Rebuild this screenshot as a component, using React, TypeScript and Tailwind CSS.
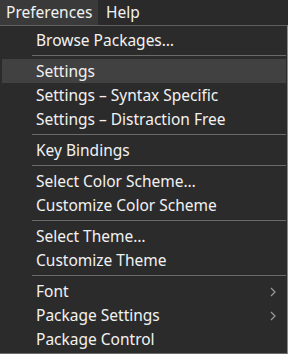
import React from 'react';

type Item = { label: string; sub?: boolean; active?: boolean } | 'sep';

const items: Item[] = [
  { label: 'Browse Packages…' },
  'sep',
  { label: 'Settings', active: true },
  { label: 'Settings – Syntax Specific' },
  { label: 'Settings – Distraction Free' },
  'sep',
  { label: 'Key Bindings' },
  'sep',
  { label: 'Select Color Scheme…' },
  { label: 'Customize Color Scheme' },
  'sep',
  { label: 'Select Theme…' },
  { label: 'Customize Theme' },
  'sep',
  { label: 'Font', sub: true },
  { label: 'Package Settings', sub: true },
  { label: 'Package Control' },
];

function Chevron() {
  return (
    <svg width="6" height="10" viewBox="0 0 6 10" className="shrink-0">
      <path d="M1 1 L5 5 L1 9" fill="none" stroke="#9a9a9a" strokeWidth="1.2" />
    </svg>
  );
}

export default function App() {
  return (
    <div className="w-[288px] h-[354px] bg-[#2b2b2b] text-[#f2f2f2] font-['Noto_Sans',sans-serif] overflow-hidden">
      {/* Menu bar */}
      <div className="h-[25px] flex items-stretch bg-[#2a2a2a] text-[15.5px]">
        <div className="px-[6px] pt-[1px] w-[98px] bg-[#3a3a3a] flex items-center">Preferences</div>
        <div className="px-[8px] pt-[1px] flex items-center">Help</div>
      </div>

      {/* Dropdown */}
      <div className="h-[329px] border-t border-[#5e5e5e] border-r border-r-[#8a8a8a] border-b border-b-[#6a6a6a] pt-[2px] pl-[2px] pr-[1px]">
        {items.map((item, i) =>
          item === 'sep' ? (
            <div key={i} className="h-px bg-[#6a6a6a] ml-[30px] my-[3px]" />
          ) : (
            <div
              key={i}
              className={`h-[24px] flex items-center justify-between pt-[2px] pl-[34px] pr-[10px] text-[15.5px] leading-none ${
                item.active ? 'bg-[#414141]' : ''
              }`}
            >
              <span>{item.label}</span>
              {item.sub && <Chevron />}
            </div>
          )
        )}
      </div>
    </div>
  );
}
